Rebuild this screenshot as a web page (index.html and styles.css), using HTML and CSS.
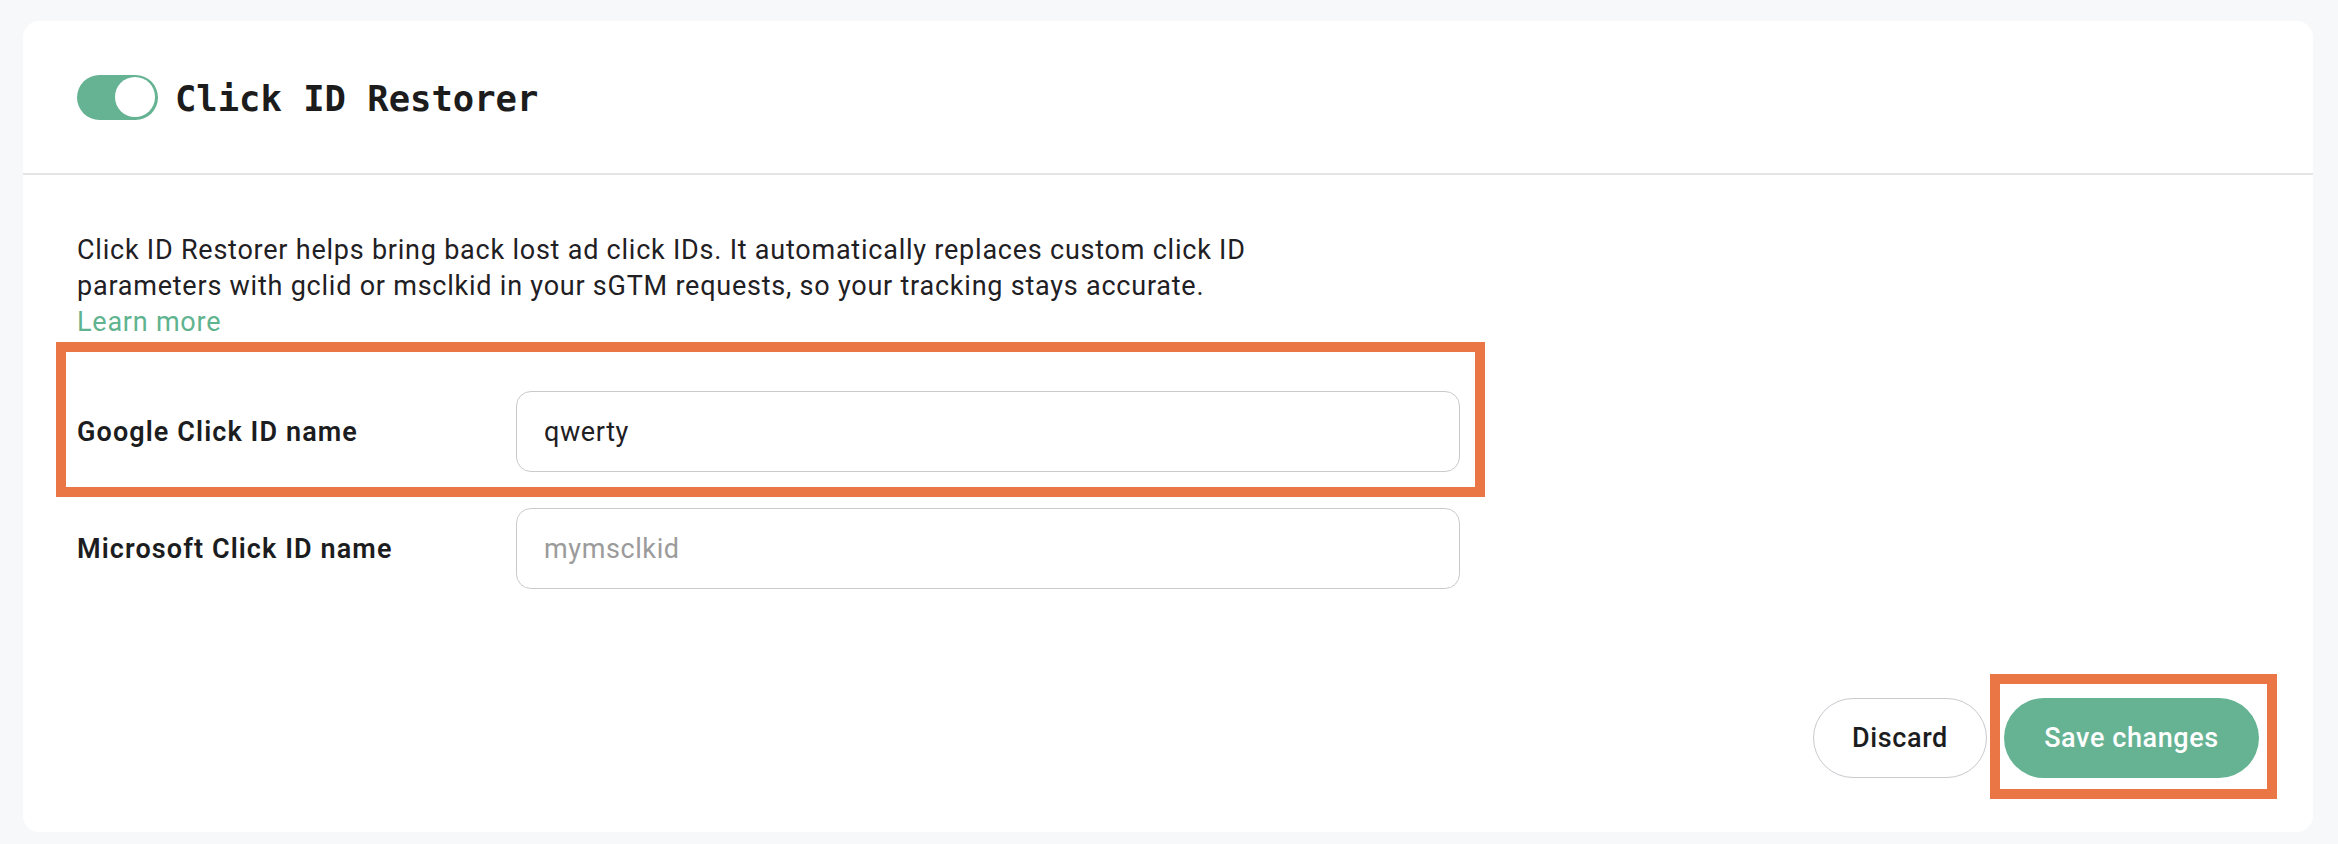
FILE: index.html
```html
<!DOCTYPE html>
<html lang="en">
<head>
<meta charset="utf-8">
<title>Click ID Restorer</title>
<link rel="stylesheet" href="styles.css">
</head>
<body>
<div class="card">
  <div class="card-header">
    <span class="toggle" role="switch" aria-checked="true"><span class="knob"></span></span>
    <h1 class="title">Click ID Restorer</h1>
  </div>
  <div class="card-body">
    <p class="desc">Click ID Restorer helps bring back lost ad click IDs. It automatically replaces custom click ID parameters with gclid or msclkid in your sGTM requests, so your tracking stays accurate.<br><a class="learn" href="#">Learn more</a></p>
    <div class="form">
      <label class="label" for="gclid">Google Click ID name</label>
      <input class="input" id="gclid" type="text" value="qwerty">
      <label class="label" for="msclkid">Microsoft Click ID name</label>
      <input class="input" id="msclkid" type="text" placeholder="mymsclkid">
    </div>
  </div>
  <div class="actions">
    <button class="btn btn-discard" type="button">Discard</button>
    <button class="btn btn-save" type="button">Save changes</button>
  </div>
  <div class="mark mark-field"></div>
  <div class="mark mark-save"></div>
</div>
</body>
</html>
```

FILE: styles.css
```css
* { box-sizing: border-box; }

html, body {
  margin: 0;
  background: #f7f8fa;
}

body {
  padding: 21px 25px 12px 23px;
  font-family: Roboto, "Liberation Sans", Arial, sans-serif;
  color: #1f2023;
}

.card {
  position: relative;
  background: #ffffff;
  border-radius: 16px;
  height: 811px;
  display: flex;
  flex-direction: column;
}

.card-header {
  height: 154px;
  border-bottom: 2px solid #e4e5e7;
  display: flex;
  align-items: center;
  gap: 17px;
  padding: 0 54px;
}

.toggle {
  width: 81px;
  height: 45px;
  border-radius: 23px;
  background: #66b394;
  display: flex;
  align-items: center;
  justify-content: flex-end;
  padding-right: 3px;
  flex-shrink: 0;
}

.knob {
  width: 40px;
  height: 40px;
  border-radius: 50%;
  background: #ffffff;
}

.title {
  margin: 0;
  font-family: "DejaVu Sans Mono", "Liberation Mono", monospace;
  font-weight: 700;
  font-size: 35.5px;
  color: #1c1c1c;
  position: relative;
  top: 1px;
}

.card-body {
  padding: 57px 54px 0;
}

.desc {
  margin: 0;
  max-width: 1240px;
  font-size: 27px;
  line-height: 36px;
  letter-spacing: 0.77px;
  color: #1f2023;
}

.learn {
  color: #5fb48f;
  text-decoration: none;
}

.form {
  margin-top: 51px;
  display: grid;
  grid-template-columns: 439px 944px;
  row-gap: 36px;
  align-items: center;
}

.label {
  font-size: 27px;
  font-weight: 600;
  letter-spacing: 1.1px;
  color: #1c1d20;
}

.input {
  height: 81px;
  width: 100%;
  border: 1.5px solid #c8cace;
  border-radius: 15px;
  padding: 0 27px;
  font-family: inherit;
  font-size: 27px;
  letter-spacing: 0.6px;
  color: #1f2023;
  background: #ffffff;
  outline: none;
}

.input::placeholder {
  color: #9b9b9b;
}

.actions {
  margin-top: auto;
  padding: 0 54px 54px;
  display: flex;
  justify-content: flex-end;
  gap: 17px;
}

.btn {
  height: 80px;
  border-radius: 40px;
  font-family: inherit;
  font-size: 27px;
  font-weight: 500;
  letter-spacing: 0.6px;
  cursor: pointer;
}

.btn-discard {
  width: 174px;
  background: #ffffff;
  border: 1.5px solid #c8cace;
  color: #1c1d20;
}

.btn-save {
  width: 255px;
  background: #66b394;
  border: none;
  color: #ffffff;
}

.mark {
  position: absolute;
  border: 10px solid #eb7645;
  pointer-events: none;
}

.mark-field {
  left: 33px;
  top: 321px;
  width: 1429px;
  height: 155px;
}

.mark-save {
  left: 1967px;
  top: 653px;
  width: 287px;
  height: 125px;
}
```
